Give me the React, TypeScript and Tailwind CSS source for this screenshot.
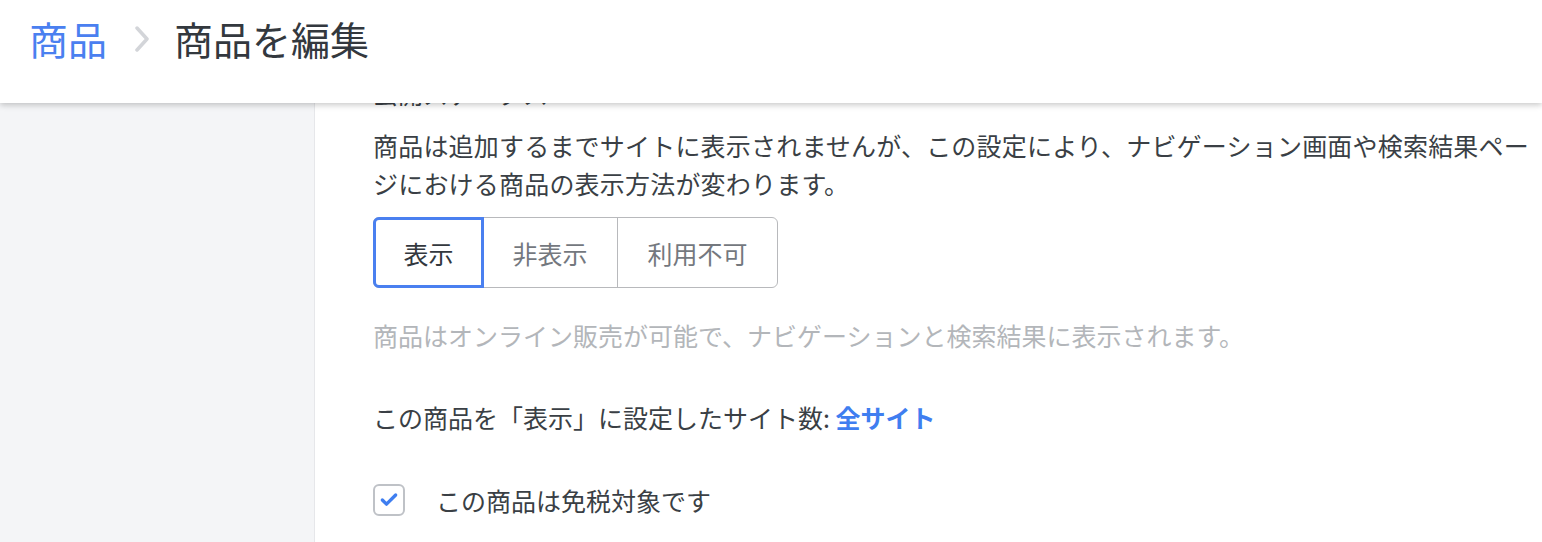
import { Check } from "lucide-react";

const font = "font-['Noto_Sans_CJK_JP','Liberation_Sans',sans-serif]";

const Header = () => (
  <div className="relative z-10 h-[103px] w-full bg-white shadow-[0_2px_6px_rgba(0,0,0,0.22)] flex items-center pl-[29px] pb-[26px]">
    <span className="text-[39px] leading-none text-[#4a80f0]">商品</span>
    <svg width="16" height="26" viewBox="0 0 16 26" className="ml-[27px] mr-[24px]" fill="none">
      <path d="M3 2 L13 13 L3 24" stroke="#d3d5d9" strokeWidth="3.5" strokeLinecap="round" strokeLinejoin="round" />
    </svg>
    <span className="text-[39px] leading-none text-[#33383e]">商品を編集</span>
  </div>
);

const options = ["表示", "非表示", "利用不可"];

const Segmented = () => (
  <div className="mt-[15px] flex w-fit h-[71px] rounded-[6px] border border-[#b8b9bc]">
    {options.map((o, i) =>
      i === 0 ? (
        <div
          key={o}
          className="-m-px flex items-center justify-center w-[111px] rounded-l-[6px] border-[3px] border-[#4a80f0] text-[#33383e]"
        >
          {o}
        </div>
      ) : (
        <div
          key={o}
          className={`flex items-center justify-center text-[#74787e] ${
            i === 1 ? "w-[134px]" : "w-[160px] border-l border-[#b8b9bc]"
          }`}
        >
          {o}
        </div>
      )
    )}
  </div>
);

export default function App() {
  return (
    <div className={`h-[542px] w-[1542px] overflow-hidden flex flex-col bg-white ${font}`}>
      <Header />
      <div className="flex flex-1">
        <aside className="w-[315px] shrink-0 bg-[#f4f5f7] border-r border-[#e6e7ea] -mt-[10px]" />
        <main className="pl-[58px] text-[25px] leading-[38px] text-[#3a3f45]">
          <h2 className="-mt-[29px]">公開ステータス</h2>
          <p className="mt-[14px] w-[1170px] tracking-[0.2px]">
            商品は追加するまでサイトに表示されませんが、この設定により、ナビゲーション画面や検索結果ページにおける商品の表示方法が変わります。
          </p>
          <Segmented />
          <p className="mt-[28px] text-[#b3b6ba]">
            商品はオンライン販売が可能で、ナビゲーションと検索結果に表示されます。
          </p>
          <p className="mt-[44px]">
            この商品を「表示」に設定したサイト数:{" "}
            <span className="font-bold text-[#3f7ef0]">全サイト</span>
          </p>
          <label className="mt-[45px] flex items-center gap-[31px]">
            <span className="flex h-[32px] w-[32px] items-center justify-center rounded-[6px] border-2 border-[#bfc2c7] bg-white">
              <Check size={20} strokeWidth={4} className="text-[#3f7ef0]" />
            </span>
            <span>この商品は免税対象です</span>
          </label>
        </main>
      </div>
    </div>
  );
}
